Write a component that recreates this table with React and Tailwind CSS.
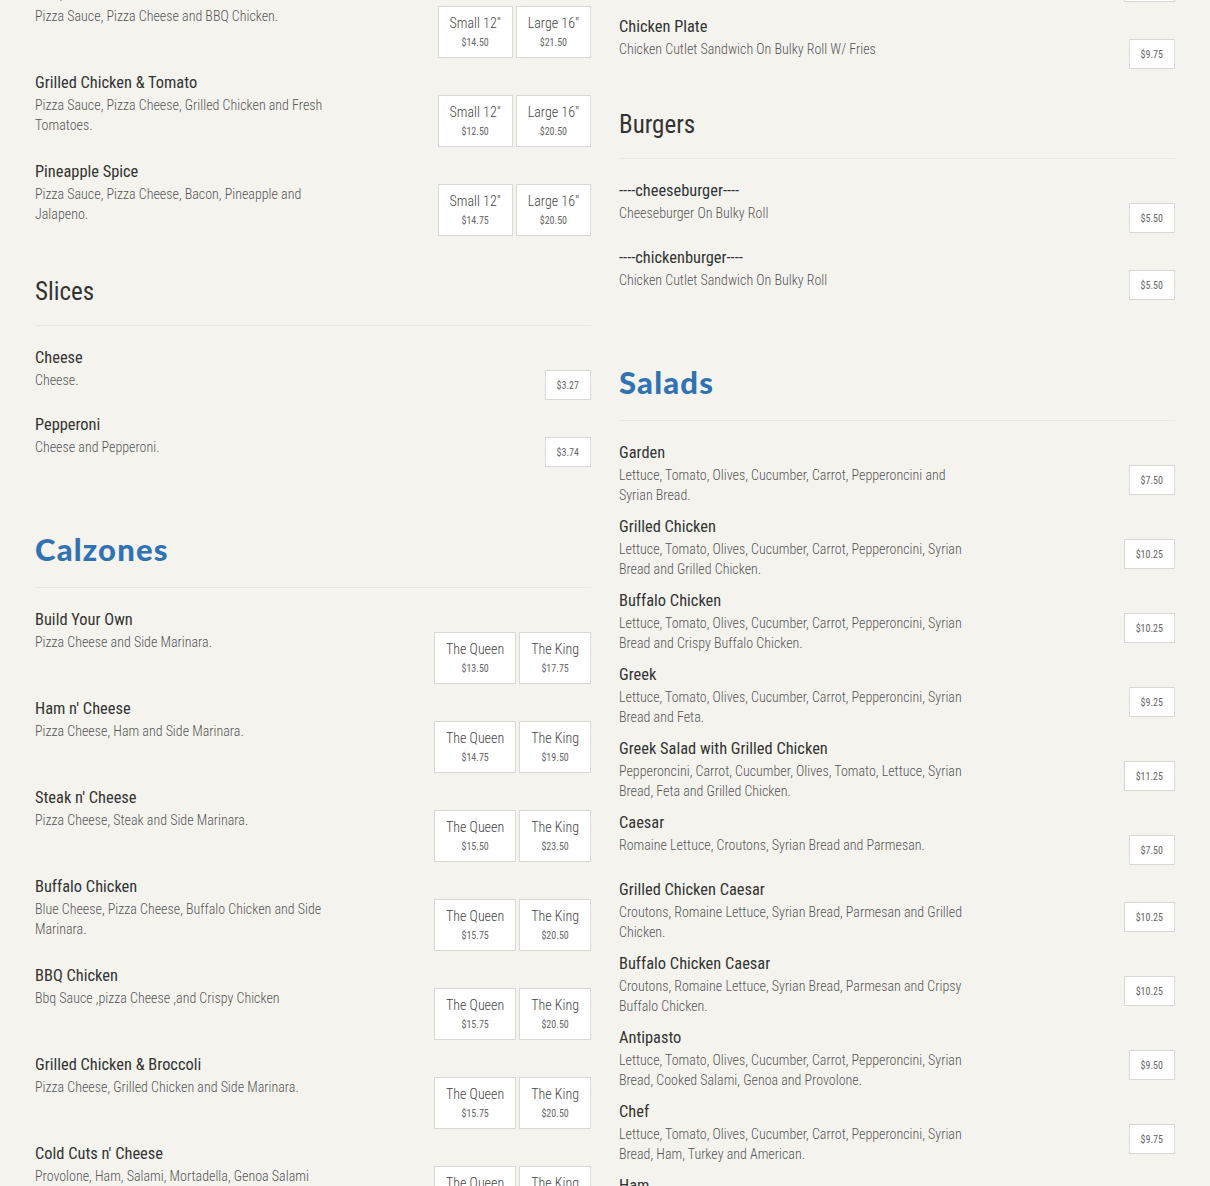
import React from "react";

const sm = (a, b) => [
  ["Small 12\"", a],
  ["Large 16\"", b],
];
const qk = (a, b) => [
  ["The Queen", a],
  ["The King", b],
];

const left = [
  {
    items: [
      { name: "BBQ Chicken", desc: "Pizza Sauce, Pizza Cheese and BBQ Chicken.", options: sm("$14.50", "$21.50") },
      { name: "Grilled Chicken & Tomato", desc: "Pizza Sauce, Pizza Cheese, Grilled Chicken and Fresh Tomatoes.", options: sm("$12.50", "$20.50") },
      { name: "Pineapple Spice", desc: "Pizza Sauce, Pizza Cheese, Bacon, Pineapple and Jalapeno.", options: sm("$14.75", "$20.50") },
    ],
  },
  {
    title: "Slices",
    items: [
      { name: "Cheese", desc: "Cheese.", price: "$3.27" },
      { name: "Pepperoni", desc: "Cheese and Pepperoni.", price: "$3.74" },
    ],
  },
  {
    title: "Calzones",
    fancy: true,
    items: [
      { name: "Build Your Own", desc: "Pizza Cheese and Side Marinara.", options: qk("$13.50", "$17.75") },
      { name: "Ham n' Cheese", desc: "Pizza Cheese, Ham and Side Marinara.", options: qk("$14.75", "$19.50") },
      { name: "Steak n' Cheese", desc: "Pizza Cheese, Steak and Side Marinara.", options: qk("$15.50", "$23.50") },
      { name: "Buffalo Chicken", desc: "Blue Cheese, Pizza Cheese, Buffalo Chicken and Side Marinara.", options: qk("$15.75", "$20.50") },
      { name: "BBQ Chicken", desc: "Bbq Sauce ,pizza Cheese ,and Crispy Chicken", options: qk("$15.75", "$20.50") },
      { name: "Grilled Chicken & Broccoli", desc: "Pizza Cheese, Grilled Chicken and Side Marinara.", options: qk("$15.75", "$20.50") },
      { name: "Cold Cuts n' Cheese", desc: "Provolone, Ham, Salami, Mortadella, Genoa Salami", options: qk("$15.75", "$20.50") },
    ],
  },
];

const greens = "Lettuce, Tomato, Olives, Cucumber, Carrot, Pepperoncini";

const right = [
  {
    items: [
      { name: "Steak Plate", desc: "Steak Sandwich On Bulky Roll W/ Fries", price: "$10.25" },
      { name: "Chicken Plate", desc: "Chicken Cutlet Sandwich On Bulky Roll W/ Fries", price: "$9.75" },
    ],
  },
  {
    title: "Burgers",
    items: [
      { name: "----cheeseburger----", desc: "Cheeseburger On Bulky Roll", price: "$5.50" },
      { name: "----chickenburger----", desc: "Chicken Cutlet Sandwich On Bulky Roll", price: "$5.50" },
    ],
  },
  {
    title: "Salads",
    fancy: true,
    items: [
      { name: "Garden", desc: `${greens} and Syrian Bread.`, price: "$7.50" },
      { name: "Grilled Chicken", desc: `${greens}, Syrian Bread and Grilled Chicken.`, price: "$10.25" },
      { name: "Buffalo Chicken", desc: `${greens}, Syrian Bread and Crispy Buffalo Chicken.`, price: "$10.25" },
      { name: "Greek", desc: `${greens}, Syrian Bread and Feta.`, price: "$9.25" },
      { name: "Greek Salad with Grilled Chicken", desc: "Pepperoncini, Carrot, Cucumber, Olives, Tomato, Lettuce, Syrian Bread, Feta and Grilled Chicken.", price: "$11.25" },
      { name: "Caesar", desc: "Romaine Lettuce, Croutons, Syrian Bread and Parmesan.", price: "$7.50" },
      { name: "Grilled Chicken Caesar", desc: "Croutons, Romaine Lettuce, Syrian Bread, Parmesan and Grilled Chicken.", price: "$10.25" },
      { name: "Buffalo Chicken Caesar", desc: "Croutons, Romaine Lettuce, Syrian Bread, Parmesan and Cripsy Buffalo Chicken.", price: "$10.25" },
      { name: "Antipasto", desc: `${greens}, Syrian Bread, Cooked Salami, Genoa and Provolone.`, price: "$9.50" },
      { name: "Chef", desc: `${greens}, Syrian Bread, Ham, Turkey and American.`, price: "$9.75" },
      { name: "Ham", desc: `${greens}, Syrian Bread, Ham and American.`, price: "$9.75" },
    ],
  },
];

function PriceTags({ item }) {
  if (item.options) {
    return (
      <div className="mt-[25px] mb-[3px] flex gap-[3px] shrink-0">
        {item.options.map(([label, price]) => (
          <div
            key={label}
            className="h-[52px] px-[11px] pt-[6px] bg-white border border-[#d9d8d4] flex flex-col items-center"
          >
            <span className="text-[14px] leading-[20px] font-light text-[#444] whitespace-nowrap">{label}</span>
            <span className="mt-[3px] text-[10px] leading-[14px] text-[#666]">{price}</span>
          </div>
        ))}
      </div>
    );
  }
  return (
    <div className="mt-[25px] mb-[3px] shrink-0">
      <div className="h-[30px] px-[11px] bg-white border border-[#d9d8d4] flex items-center text-[10px] text-[#666]">
        {item.price}
      </div>
    </div>
  );
}

function MenuItem({ item, narrow }) {
  return (
    <div className="flex items-start justify-between pb-[9px]">
      <div className={narrow ? "w-[300px]" : "w-[345px]"}>
        <div className="text-[16.4px] leading-[25px] text-[#333]">{item.name}</div>
        <div className="text-[14px] leading-[20px] font-light text-[#555]">{item.desc}</div>
      </div>
      <PriceTags item={item} />
    </div>
  );
}

function Section({ section, narrow }) {
  return (
    <section>
      {section.title &&
        (section.fancy ? (
          <h2 className="mt-[50px] h-[59px] pb-[19px] border-b border-[#e8e7e1] font-['Lato',sans-serif] font-black text-[31px] leading-[40px] tracking-[1.2px] text-[#3072b2]">
            {section.title}
          </h2>
        ) : (
          <h2 className="mt-[28px] h-[50px] pb-[18px] border-b border-[#e8e7e1] text-[25px] leading-[32px] text-[#333]">
            {section.title}
          </h2>
        ))}
      <div className={section.title ? "pt-[19px]" : ""}>
        {section.items.map((item, i) => (
          <MenuItem key={i} item={item} narrow={narrow} />
        ))}
      </div>
    </section>
  );
}

export default function App() {
  return (
    <div className="h-[1186px] overflow-hidden bg-[#f4f3ee] font-['Roboto_Condensed',Roboto,sans-serif]">
      <div className="px-[35px] grid grid-cols-2 gap-[28px]">
        <div className="-mt-[19px]">
          {left.map((s, i) => (
            <Section key={i} section={s} narrow />
          ))}
        </div>
        <div className="-mt-[53px]">
          {right.map((s, i) => (
            <Section key={i} section={s} />
          ))}
        </div>
      </div>
    </div>
  );
}
